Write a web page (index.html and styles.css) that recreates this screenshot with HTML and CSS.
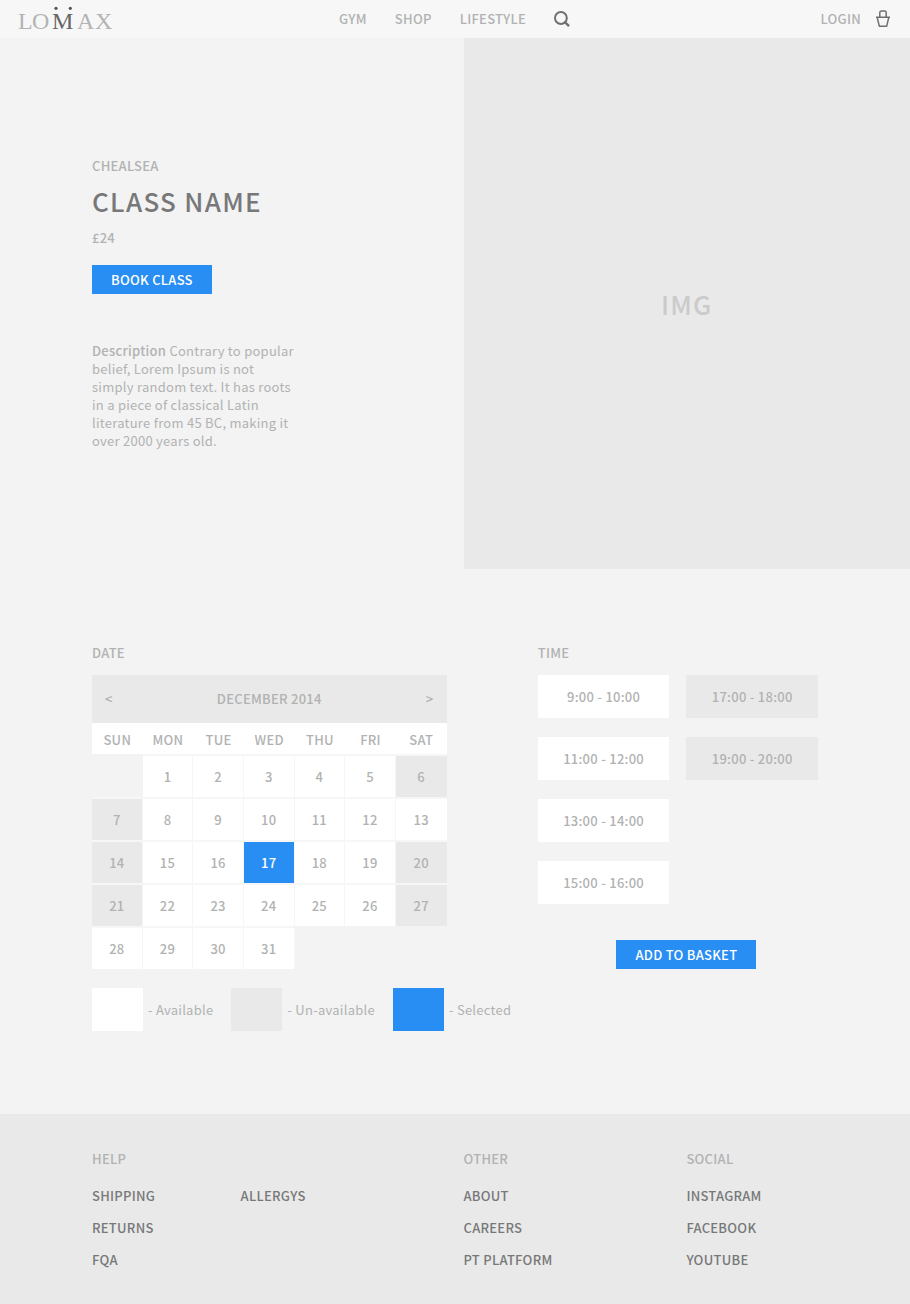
FILE: index.html
```html
<!DOCTYPE html>
<html lang="en">
<head>
<meta charset="utf-8">
<meta name="viewport" content="width=device-width, initial-scale=1">
<title>Lomax - Class name</title>
<link rel="stylesheet" href="styles.css">
</head>
<body>
<header class="site-header">
  <a class="logo" href="#" aria-label="Lomax">
    <svg class="logo-mark" viewBox="0 0 100 32" width="100" height="32">
      <g class="logo-light">
        <text x="0" y="26">L</text>
        <text x="14" y="26">O</text>
        <text x="59" y="26">A</text>
        <text x="77" y="26">X</text>
      </g>
      <text class="logo-dark" x="34" y="26">M</text>
      <circle cx="38" cy="5.3" r="1.6" fill="#555"/>
      <circle cx="52.3" cy="5.3" r="1.6" fill="#555"/>
    </svg>
  </a>
  <nav class="main-nav" aria-label="Main">
    <a href="#">GYM</a>
    <a href="#">SHOP</a>
    <a href="#">LIFESTYLE</a>
    <button class="icon-button" type="button" aria-label="Search">
      <svg viewBox="0 0 16 16" width="16" height="16" fill="none" stroke="#6f6f6f" stroke-width="2"><circle cx="6.9" cy="7" r="5.9"/><path d="M10.3 10.5L15 15.2" stroke-width="2.4"/></svg>
    </button>
  </nav>
  <div class="account">
    <a href="#">LOGIN</a>
    <button class="icon-button" type="button" aria-label="Basket">
      <svg viewBox="0 0 16 18" width="16" height="18" fill="none" stroke="#6f6f6f" stroke-width="1.5" stroke-linejoin="round"><path d="M1 7.2H15M2.2 7.4L4.3 16.2H11.7L13.8 7.4M4.8 7V2.6Q4.8 .9 6.5 .9H9.5Q11.2 .9 11.2 2.6V7"/></svg>
    </button>
  </div>
</header>

<main>
  <section class="hero columns">
    <div class="hero-text">
      <p class="label">CHEALSEA</p>
      <h1 class="title">CLASS NAME</h1>
      <p class="label">£24</p>
      <button class="action" type="button">BOOK CLASS</button>
      <p class="description"><strong>Description</strong> Contrary to popular belief, Lorem Ipsum is not simply random text. It has roots in a piece of classical Latin literature from 45 BC, making it over 2000 years old.</p>
    </div>
    <div class="hero-image">IMG</div>
  </section>

  <section class="booking columns">
    <div class="date">
      <h2 class="label">DATE</h2>
      <div class="month">
        <button type="button" aria-label="Previous month">&lt;</button>
        <span>DECEMBER 2014</span>
        <button type="button" aria-label="Next month">&gt;</button>
      </div>
      <table class="calendar">
        <thead>
          <tr><th>SUN</th><th>MON</th><th>TUE</th><th>WED</th><th>THU</th><th>FRI</th><th>SAT</th></tr>
        </thead>
        <tbody>
          <tr><td class="empty"></td><td>1</td><td>2</td><td>3</td><td>4</td><td>5</td><td class="off">6</td></tr>
          <tr><td class="off">7</td><td>8</td><td>9</td><td>10</td><td>11</td><td>12</td><td>13</td></tr>
          <tr><td class="off">14</td><td>15</td><td>16</td><td class="selected">17</td><td>18</td><td>19</td><td class="off">20</td></tr>
          <tr><td class="off">21</td><td>22</td><td>23</td><td>24</td><td>25</td><td>26</td><td class="off">27</td></tr>
          <tr><td>28</td><td>29</td><td>30</td><td>31</td><td class="empty"></td><td class="empty"></td><td class="empty"></td></tr>
        </tbody>
      </table>
    </div>

    <div class="time">
      <h2 class="label">TIME</h2>
      <div class="slots">
        <button type="button">9:00 - 10:00</button>
        <button type="button" disabled>17:00 - 18:00</button>
        <button type="button">11:00 - 12:00</button>
        <button type="button" disabled>19:00 - 20:00</button>
        <button type="button">13:00 - 14:00</button>
        <button class="first-column" type="button">15:00 - 16:00</button>
      </div>
      <div class="basket-row"><button class="action" type="button">ADD TO BASKET</button></div>
    </div>

    <ul class="legend">
      <li><span class="swatch"></span>- Available</li>
      <li><span class="swatch off"></span>- Un-available</li>
      <li><span class="swatch selected"></span>- Selected</li>
    </ul>
  </section>
</main>

<footer class="site-footer columns">
  <div class="links help">
    <h2>HELP</h2>
    <ul>
      <li><a href="#">SHIPPING</a></li>
      <li><a href="#">RETURNS</a></li>
      <li><a href="#">FQA</a></li>
      <li><a href="#">ALLERGYS</a></li>
    </ul>
  </div>
  <div class="links other">
    <h2>OTHER</h2>
    <ul>
      <li><a href="#">ABOUT</a></li>
      <li><a href="#">CAREERS</a></li>
      <li><a href="#">PT PLATFORM</a></li>
    </ul>
  </div>
  <div class="links social">
    <h2>SOCIAL</h2>
    <ul>
      <li><a href="#">INSTAGRAM</a></li>
      <li><a href="#">FACEBOOK</a></li>
      <li><a href="#">YOUTUBE</a></li>
    </ul>
  </div>
</footer>
</body>
</html>
```

FILE: styles.css
```css
:root {
  --page: #f3f3f3;
  --panel: #e9e9e9;
  --text: #b1b2b2;
  --dark: #777879;
  --blue: #288ef3;
  --margin: 92px;
  --gutter: 17px;
}

* {
  box-sizing: border-box;
}

body {
  margin: 0;
  background: var(--page);
  color: var(--text);
  font-family: "Noto Sans CJK SC", "Noto Sans", sans-serif;
  font-size: 13px;
  font-weight: 500;
  line-height: 18px;
  letter-spacing: 0.02em;
}

h1, h2, p, ul {
  margin: 0;
  padding: 0;
  font-size: inherit;
  font-weight: inherit;
}

ul {
  list-style: none;
}

a {
  color: inherit;
  text-decoration: none;
}

button {
  padding: 0;
  border: 0;
  background: none;
  color: inherit;
  font: inherit;
  letter-spacing: inherit;
  cursor: pointer;
}

svg {
  display: block;
}

.columns {
  display: grid;
  grid-template-columns: repeat(10, minmax(0, 1fr));
  column-gap: var(--gutter);
  padding: 0 var(--margin);
}

/* Header */

.site-header {
  display: grid;
  grid-template-columns: 1fr auto 1fr;
  align-items: center;
  height: 38px;
  padding: 0 19px 0 18px;
  background: #f7f7f7;
}

.logo-mark {
  font-family: "Liberation Serif", serif;
  font-size: 24px;
  font-weight: 400;
  letter-spacing: 0;
}

.logo-light {
  fill: #b4b4b4;
}

.logo-dark {
  fill: #666;
}

.main-nav {
  display: flex;
  align-items: center;
  gap: 28px;
}

.account {
  display: flex;
  align-items: center;
  justify-content: flex-end;
  gap: 14px;
}

/* Hero */

.hero-text {
  grid-column: 1 / 6;
  align-self: center;
}

.title {
  margin: 8px 0 10px;
  color: var(--dark);
  font-size: 26px;
  line-height: 36px;
  letter-spacing: 0.05em;
}

.action {
  height: 29px;
  padding: 0 19px;
  background: var(--blue);
  color: #fff;
}

.hero-text .action {
  margin-top: 18px;
}

.description {
  max-width: 205px;
  margin-top: 48px;
  font-weight: 400;
}

.description strong {
  font-weight: 500;
}

.hero-image {
  display: flex;
  grid-column: 6 / -1;
  align-items: center;
  justify-content: center;
  min-height: 531px;
  margin-right: calc(var(--margin) * -1);
  background: var(--panel);
  color: #cbcbcb;
  font-size: 26px;
  letter-spacing: 0.05em;
}

/* Booking */

.booking {
  padding-top: 75px;
  padding-bottom: 83px;
}

.booking .label {
  margin-bottom: 13px;
}

.date {
  grid-column: 1 / 6;
}

.month {
  display: flex;
  align-items: center;
  justify-content: space-between;
  height: 48px;
  padding: 0 13px;
  background: var(--panel);
}

.calendar {
  width: 100%;
  table-layout: fixed;
  border-spacing: 0;
  text-align: center;
}

.calendar th {
  height: 31px;
  padding: 2px 0 0;
  background: #fff;
  font-weight: inherit;
}

.calendar td {
  height: 43px;
  padding: 0;
  border: 0 solid #f6f6f6;
  border-width: 2px 1px 0 0;
  background: #fff;
}

.calendar td:last-child {
  border-right: 0;
}

.calendar td.empty {
  border-color: var(--page);
  background: var(--page);
}

.calendar td.off,
.swatch.off {
  background: var(--panel);
}

.calendar td.selected {
  background: var(--blue);
  color: #fff;
}

.swatch.selected {
  background: var(--blue);
}

.time {
  grid-column: 7 / -1;
}

.slots {
  display: grid;
  grid-template-columns: 1fr 1fr;
  gap: 19px var(--gutter);
}

.slots button {
  height: 43px;
  background: #fff;
}

.slots button:disabled {
  background: var(--panel);
}

.slots .first-column {
  grid-column: 1;
}

.basket-row {
  display: flex;
  justify-content: center;
  margin-top: 36px;
  padding-left: var(--gutter);
}

.legend {
  display: flex;
  grid-column: 1 / -1;
  gap: 18px;
  margin-top: 19px;
  font-weight: 400;
}

.legend li {
  display: flex;
  align-items: center;
  gap: 5px;
}

.swatch {
  width: 51px;
  height: 43px;
  background: #fff;
}

/* Footer */

.site-footer {
  padding-top: 36px;
  padding-bottom: 35px;
  background: var(--panel);
}

.links h2 {
  margin-bottom: 19px;
}

.links ul {
  display: grid;
  row-gap: 14px;
  color: var(--dark);
}

.help {
  grid-column: 1 / 5;
}

.help ul {
  grid-template-rows: repeat(3, auto);
  grid-auto-flow: column;
  grid-auto-columns: 1fr;
  column-gap: var(--gutter);
}

.other {
  grid-column: 6 / 9;
}

.social {
  grid-column: 9 / -1;
}
```
